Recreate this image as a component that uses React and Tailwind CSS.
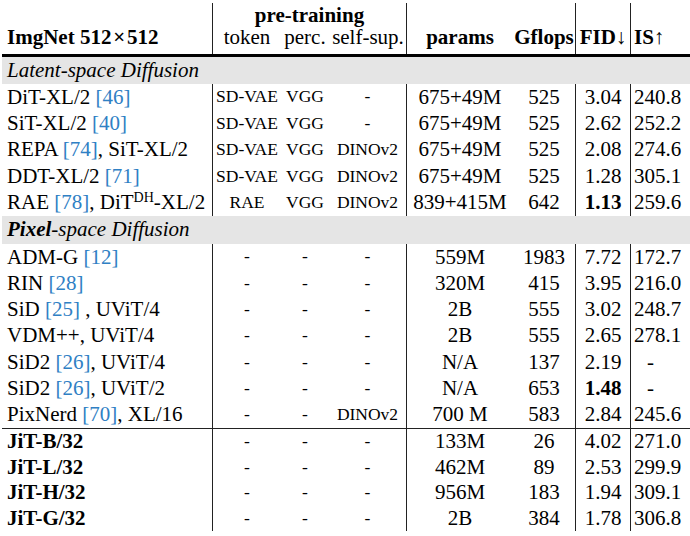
import React from "react";

// column widths follow the reference rules at x = 213, 408, 578, 634
const col = {
  name: "w-[211px] shrink-0 pl-[5px] border-r border-[#222] whitespace-nowrap",
  token: "w-[68px] shrink-0 text-center",
  perc: "w-[48px] shrink-0 text-center",
  self: "w-[78px] shrink-0 text-center border-r border-[#222]",
  params: "w-[106px] shrink-0 text-center",
  gflops: "w-[63px] shrink-0 text-center border-r border-[#222]",
  fid: "w-[55px] shrink-0 text-center border-r border-[#222]",
  is: "w-[55px] shrink-0 pl-[3px]",
};

const Cite = ({ n }) => <span className="text-[#2f80c4]">[{n}]</span>;

const latent = [
  { name: <>DiT-XL/2 <Cite n={46} /></>, tok: "SD-VAE", perc: "VGG", self: "-", params: "675+49M", gf: "525", fid: "3.04", is: "240.8" },
  { name: <>SiT-XL/2 <Cite n={40} /></>, tok: "SD-VAE", perc: "VGG", self: "-", params: "675+49M", gf: "525", fid: "2.62", is: "252.2" },
  { name: <>REPA <Cite n={74} />, SiT-XL/2</>, tok: "SD-VAE", perc: "VGG", self: "DINOv2", params: "675+49M", gf: "525", fid: "2.08", is: "274.6" },
  { name: <>DDT-XL/2 <Cite n={71} /></>, tok: "SD-VAE", perc: "VGG", self: "DINOv2", params: "675+49M", gf: "525", fid: "1.28", is: "305.1" },
  {
    name: <>RAE <Cite n={78} />, DiT<sup className="text-[14px]">DH</sup>-XL/2</>,
    tok: "RAE", perc: "VGG", self: "DINOv2", params: "839+415M", gf: "642", fid: <b>1.13</b>, is: "259.6",
  },
];

const pixel = [
  { name: <>ADM-G <Cite n={12} /></>, self: "-", params: "559M", gf: "1983", fid: "7.72", is: "172.7" },
  { name: <>RIN <Cite n={28} /></>, self: "-", params: "320M", gf: "415", fid: "3.95", is: "216.0" },
  { name: <>SiD <Cite n={25} /> , UViT/4</>, self: "-", params: "2B", gf: "555", fid: "3.02", is: "248.7" },
  { name: <>VDM++, UViT/4</>, self: "-", params: "2B", gf: "555", fid: "2.65", is: "278.1" },
  { name: <>SiD2 <Cite n={26} />, UViT/4</>, self: "-", params: "N/A", gf: "137", fid: "2.19", is: "-" },
  { name: <>SiD2 <Cite n={26} />, UViT/2</>, self: "-", params: "N/A", gf: "653", fid: <b>1.48</b>, is: "-" },
  { name: <>PixNerd <Cite n={70} />, XL/16</>, self: "DINOv2", params: "700 M", gf: "583", fid: "2.84", is: "245.6" },
];

const jit = [
  { name: "JiT-B/32", params: "133M", gf: "26", fid: "4.02", is: "271.0" },
  { name: "JiT-L/32", params: "462M", gf: "89", fid: "2.53", is: "299.9" },
  { name: "JiT-H/32", params: "956M", gf: "183", fid: "1.94", is: "309.1" },
  { name: "JiT-G/32", params: "2B", gf: "384", fid: "1.78", is: "306.8" },
];

function Row({ r, h, bold }) {
  return (
    <div className={`flex items-stretch ${h}`}>
      <div className={`${col.name} flex items-center ${bold ? "font-bold" : ""}`}>
        <span>{r.name}</span>
      </div>
      <div className={`${col.token} flex items-center justify-center text-[17.5px]`}>{r.tok ?? "-"}</div>
      <div className={`${col.perc} flex items-center justify-center text-[17.5px]`}>{r.perc ?? "-"}</div>
      <div className={`${col.self} flex items-center justify-center text-[17.5px]`}>{r.self ?? "-"}</div>
      <div className={`${col.params} flex items-center justify-center`}>{r.params}</div>
      <div className={`${col.gflops} flex items-center justify-center`}>{r.gf}</div>
      <div className={`${col.fid} flex items-center justify-center`}>{r.fid}</div>
      <div className={`${col.is} flex items-center ${r.is === "-" ? "pl-[16px]" : ""}`}>{r.is}</div>
    </div>
  );
}

function GroupBand({ children, h }) {
  return (
    <div className={`${h} bg-[#e5e5e5] flex items-center pl-[5px] italic`}>
      <span>{children}</span>
    </div>
  );
}

export default function App() {
  return (
    <div className="w-[690px] h-[536px] bg-white overflow-hidden">
      <div
        className="ml-[2px] w-[688px] text-[21px] leading-none text-black"
        style={{ fontFamily: '"Liberation Serif", "Times New Roman", serif' }}
      >
        {/* header */}
        <div className="flex h-[54px] pt-[3px]">
          <div className={`${col.name} flex items-end pb-[6px] font-bold`}>
            <span>ImgNet 512{"\u200A"}×{"\u200A"}512</span>
          </div>
          <div className="w-[194px] shrink-0 border-r border-[#222] flex flex-col">
            <div className="h-[25px] flex items-center justify-center font-bold">pre-training</div>
            <div className="flex flex-1 items-end pb-[6px]">
              <div className={col.token}>token</div>
              <div className={col.perc}>perc.</div>
              <div className="w-[78px] shrink-0 text-center">self-sup.</div>
            </div>
          </div>
          <div className={`${col.params} flex items-end justify-center pb-[6px] font-bold`}>params</div>
          <div className={`${col.gflops} flex items-end justify-center pb-[6px] font-bold`}>Gflops</div>
          <div className={`${col.fid} flex items-end justify-center pb-[6px] font-bold`}>FID↓</div>
          <div className={`${col.is} flex items-end pb-[6px] font-bold`}>IS↑</div>
        </div>
        <div className="h-[3px] bg-black" />

        <GroupBand h="h-[27px]">Latent-space Diffusion</GroupBand>
        {latent.map((r, i) => (
          <Row key={i} r={r} h="h-[26.4px]" />
        ))}

        <GroupBand h="h-[28px]">
          <b>Pixel</b>-space Diffusion
        </GroupBand>
        {pixel.map((r, i) => (
          <Row key={i} r={r} h="h-[26.3px]" />
        ))}

        <div className="h-px bg-[#222]" />
        {jit.map((r, i) => (
          <Row key={i} r={r} h="h-[25.5px]" bold />
        ))}
      </div>
    </div>
  );
}
